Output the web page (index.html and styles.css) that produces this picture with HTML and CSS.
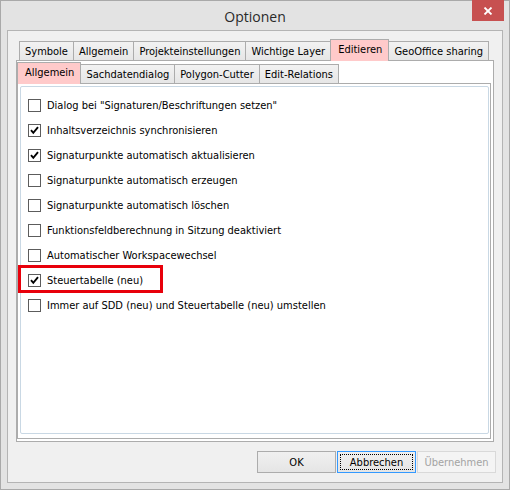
FILE: index.html
```html
<!DOCTYPE html>
<html lang="de">
<head>
<meta charset="utf-8">
<title>Optionen</title>
<link rel="stylesheet" href="styles.css">
</head>
<body>
<div class="window">
  <div class="titlebar">
    <span class="title">Optionen</span>
    <div class="close">
      <svg width="10" height="8" viewBox="0 0 10 8"><path d="M1.5 0.5 L8.5 7.5 M8.5 0.5 L1.5 7.5" stroke="#fff" stroke-width="1.8" fill="none"/></svg>
    </div>
  </div>
  <div class="client">
    <div class="tabs outer-tabs">
      <div class="tab">Symbole</div>
      <div class="tab">Allgemein</div>
      <div class="tab">Projekteinstellungen</div>
      <div class="tab">Wichtige Layer</div>
      <div class="tab selected">Editieren</div>
      <div class="tab">GeoOffice sharing</div>
    </div>
    <div class="panel outer-panel">
      <div class="tabs inner-tabs">
        <div class="tab selected">Allgemein</div>
        <div class="tab">Sachdatendialog</div>
        <div class="tab">Polygon-Cutter</div>
        <div class="tab">Edit-Relations</div>
      </div>
      <div class="panel inner-panel">
        <div class="list">
          <div class="row"><span class="box"></span><span>Dialog bei "Signaturen/Beschriftungen setzen"</span></div>
          <div class="row"><span class="box checked"><svg width="11" height="11" viewBox="0 0 11 11"><path d="M2 5.2 L4.3 7.8 L9 2.2" stroke="#000" stroke-width="1.9" fill="none"/></svg></span><span>Inhaltsverzeichnis synchronisieren</span></div>
          <div class="row"><span class="box checked"><svg width="11" height="11" viewBox="0 0 11 11"><path d="M2 5.2 L4.3 7.8 L9 2.2" stroke="#000" stroke-width="1.9" fill="none"/></svg></span><span>Signaturpunkte automatisch aktualisieren</span></div>
          <div class="row"><span class="box"></span><span>Signaturpunkte automatisch erzeugen</span></div>
          <div class="row"><span class="box"></span><span>Signaturpunkte automatisch löschen</span></div>
          <div class="row"><span class="box"></span><span>Funktionsfeldberechnung in Sitzung deaktiviert</span></div>
          <div class="row"><span class="box"></span><span>Automatischer Workspacewechsel</span></div>
          <div class="row highlighted"><span class="box checked"><svg width="11" height="11" viewBox="0 0 11 11"><path d="M2 5.2 L4.3 7.8 L9 2.2" stroke="#000" stroke-width="1.9" fill="none"/></svg></span><span>Steuertabelle (neu)</span><span class="mark"></span></div>
          <div class="row"><span class="box"></span><span>Immer auf SDD (neu) und Steuertabelle (neu) umstellen</span></div>
        </div>
      </div>
    </div>
    <div class="buttons">
      <div class="btn">OK</div>
      <div class="btn focused"><span class="focus">Abbrechen</span></div>
      <div class="btn disabled">Übernehmen</div>
    </div>
  </div>
</div>
</body>
</html>
```

FILE: styles.css
```css
html, body {
  margin: 0;
  padding: 0;
  background: #ffffff;
}

.window {
  box-sizing: border-box;
  width: 510px;
  height: 490px;
  border: 1px solid #a9a9a9;
  background: #e3e3e3;
  padding: 0 6px 6px 6px;
  display: flex;
  flex-direction: column;
  font-family: "DejaVu Sans", "Liberation Sans", sans-serif;
  font-stretch: condensed;
  font-size: 11px;
  color: #000;
}

.titlebar {
  height: 29px;
  position: relative;
  display: flex;
  align-items: center;
  justify-content: center;
  flex: none;
}

.title {
  font-family: "Open Sans", "Noto Sans", sans-serif;
  font-stretch: normal;
  font-size: 14px;
  color: #2a2a2a;
  padding-top: 2px;
}

.close {
  position: absolute;
  top: -1px;
  right: -1px;
  width: 32px;
  height: 21px;
  background: #c75050;
  display: flex;
  align-items: center;
  justify-content: center;
}

.client {
  flex: 1;
  border: 1px solid #b4b4b4;
  background: #f0f0f0;
  padding: 8px 8px 0 8px;
  display: flex;
  flex-direction: column;
}

.tabs {
  display: flex;
  align-items: flex-end;
  height: 22px;
  margin-bottom: -1px;
  position: relative;
  z-index: 1;
}

.outer-tabs {
  padding-left: 3px;
}

.tab {
  box-sizing: border-box;
  height: 19px;
  margin-bottom: 1px;
  border: 1px solid #acacac;
  border-bottom: none;
  border-right: none;
  background: linear-gradient(#f2f2f2, #e6e6e6);
  padding: 0 5px;
  display: flex;
  align-items: center;
  white-space: nowrap;
}

.tab:last-child {
  border-right: 1px solid #acacac;
}

.tab.selected {
  height: 22px;
  margin-bottom: 0;
  background: #ffcaca;
  border-right: 1px solid #acacac;
  padding: 0 6px 2px 7px;
}

.tab.selected + .tab {
  border-left: none;
}

.panel {
  border: 1px solid #acacac;
  background: #ffffff;
}

.outer-panel {
  height: 382px;
  box-sizing: border-box;
  padding: 1px 2px 2px 0;
  display: flex;
  flex-direction: column;
}

.inner-panel {
  flex: 1;
  padding: 2px 1px 4px 2px;
  display: flex;
  flex-direction: column;
}

.list {
  flex: 1;
  border: 1px solid #c9d8e4;
  border-radius: 2px;
  padding-top: 6px;
}

.row {
  height: 25px;
  display: flex;
  align-items: center;
  padding-left: 7px;
  position: relative;
  white-space: nowrap;
}

.box {
  box-sizing: border-box;
  width: 13px;
  height: 13px;
  border: 1px solid #5c5c5c;
  background: #fff;
  margin-right: 6px;
  flex: none;
  display: flex;
  align-items: center;
  justify-content: center;
}

.mark {
  position: absolute;
  left: -3px;
  top: -3px;
  width: 145px;
  height: 28px;
  box-sizing: border-box;
  border: 3px solid #e8000b;
}

.buttons {
  display: flex;
  justify-content: flex-end;
  gap: 1px;
  margin-top: 9px;
  margin-right: -2px;
}

.btn {
  box-sizing: border-box;
  width: 79px;
  height: 22px;
  border: 1px solid #acacac;
  background: linear-gradient(#f0f0f0, #e5e5e5);
  display: flex;
  align-items: center;
  justify-content: center;
  font-size: 11px;
}

.btn.focused {
  border-color: #3399ff;
  padding: 2px;
}

.focus {
  flex: 1;
  align-self: stretch;
  border: 1px dotted #000;
  display: flex;
  align-items: center;
  justify-content: center;
}

.btn.disabled {
  border-color: #d9d9d9;
  background: #f4f4f4;
  color: #a3a3a3;
}
```
